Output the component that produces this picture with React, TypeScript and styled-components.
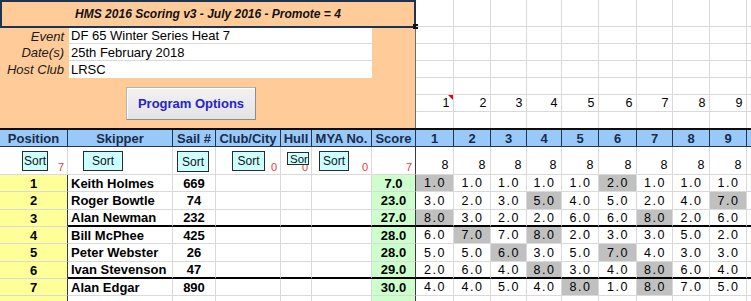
import React from 'react';
import styled, { createGlobalStyle } from 'styled-components';

const GlobalStyle = createGlobalStyle`
  html, body { margin: 0; padding: 0; background: #fff; }
  body {
    font-family: "Liberation Sans", Arial, sans-serif;
    font-size: 13px;
    color: #000;
    overflow: hidden;
  }
  * { box-sizing: border-box; }
`;

const MAIN_W = [68, 105, 43, 65, 31, 60, 44];
const RACE_W = [38, 37, 36, 35, 37, 38, 36, 37, 37];
const EXTRA_W = 40;
const gridCols = [...MAIN_W, ...RACE_W, EXTRA_W].map((w) => `${w}px`).join(' ');
const raceCols = [...RACE_W, EXTRA_W].map((w) => `${w}px`).join(' ');

const GRID = '#d9d9d9';
const DARK = '#3a3a3a';

const Sheet = styled.div`
  width: 751px;
  height: 301px;
  overflow: hidden;
  background: #fff;
`;

const Top = styled.div`
  display: flex;
  height: 128px;
`;

const Panel = styled.div`
  width: 416px;
  flex: none;
  background: #ffcc99;
  display: flex;
  flex-direction: column;
`;

const TitleBox = styled.div`
  position: relative;
  height: 28px;
  border: 2px solid #1c3352;
  display: flex;
  align-items: center;
  justify-content: center;
  font-weight: bold;
  font-style: italic;
  font-size: 12px;
  color: #111;
`;

const Handle = styled.span`
  position: absolute;
  right: -4px;
  bottom: -3px;
  width: 5px;
  height: 5px;
  background: #111;
`;

const InfoArea = styled.div`
  flex: 1;
  display: flex;
  flex-direction: column;
  border-right: 1px solid #6b6b6b;
`;

const InfoRow = styled.div<{ $h: number }>`
  display: flex;
  height: ${(p) => p.$h}px;
`;

const Label = styled.div`
  width: 69px;
  display: flex;
  align-items: center;
  justify-content: flex-end;
  padding-right: 5px;
  font-style: italic;
  color: #1a1a1a;
`;

const Value = styled.div<{ $last?: boolean }>`
  width: 303px;
  display: flex;
  align-items: center;
  padding-left: 2px;
  background: #fff;
  border-bottom: ${(p) => (p.$last ? 'none' : `1px solid ${GRID}`)};
`;

const ButtonArea = styled.div`
  flex: 1;
  padding: 9px 0 0 126px;
`;

const ProgramButton = styled.button`
  width: 130px;
  height: 33px;
  padding: 0;
  font-family: "Liberation Sans", Arial, sans-serif;
  font-size: 13px;
  font-weight: bold;
  color: #2424c8;
  background: linear-gradient(#f2f2f2, #e3e3e3);
  border: 1px solid #b4b4b4;
  border-right-color: #8c8c8c;
  border-bottom-color: #8c8c8c;
  box-shadow: inset 1px 1px 0 #fff;
`;

const RightGrid = styled.div`
  flex: none;
  display: grid;
  grid-template-columns: ${raceCols};
  grid-template-rows: 27px 17px 17px 17px 17px 17px 16px;
`;

const GridCell = styled.div<{ $noBottom?: boolean }>`
  position: relative;
  display: flex;
  align-items: center;
  justify-content: flex-end;
  padding-right: 2px;
  border-right: 1px solid ${GRID};
  border-bottom: ${(p) => (p.$noBottom ? 'none' : `1px solid ${GRID}`)};
  font-size: 12.5px;
  letter-spacing: 1.5px;
`;

const CommentMark = styled.span`
  position: absolute;
  top: 0;
  right: 0;
  width: 0;
  height: 0;
  border-top: 5px solid #d01010;
  border-left: 5px solid transparent;
`;

const HeaderRow = styled.div`
  display: grid;
  grid-template-columns: ${gridCols};
  height: 19px;
  border-top: 2px solid #0d0d0d;
`;

const HeaderCell = styled.div`
  display: flex;
  align-items: center;
  justify-content: center;
  background: #99c9f9;
  border-right: 1px solid #24334f;
  border-bottom: 1px solid #24334f;
  font-weight: bold;
  font-size: 13px;
  color: #1b2b4b;
  white-space: nowrap;
  overflow: hidden;
`;

const SortRow = styled.div`
  display: grid;
  grid-template-columns: ${gridCols};
  height: 28px;
`;

const SortCell = styled.div<{ $darkRight?: boolean; $count?: boolean }>`
  position: relative;
  display: flex;
  align-items: ${(p) => (p.$count ? 'flex-end' : 'flex-start')};
  justify-content: ${(p) => (p.$count ? 'flex-end' : 'flex-start')};
  padding: ${(p) => (p.$count ? '0 3px 2px 0' : '0')};
  border-right: 1px solid ${(p) => (p.$darkRight ? DARK : GRID)};
  border-bottom: 1px solid ${GRID};
  font-size: 12.5px;
  letter-spacing: ${(p) => (p.$count ? '1.5px' : '0')};
`;

const SortButton = styled.div<{ $x: number; $y: number; $w: number; $h: number }>`
  position: relative;
  z-index: 1;
  margin: ${(p) => `${p.$y}px 0 0 ${p.$x}px`};
  width: ${(p) => p.$w}px;
  height: ${(p) => p.$h}px;
  flex: none;
  background: #ccffff;
  border: 1px solid #2a2a2a;
  display: flex;
  align-items: center;
  justify-content: ${(p) => (p.$w < 25 ? 'flex-start' : 'center')};
  padding-left: ${(p) => (p.$w < 25 ? '2px' : '0')};
  overflow: hidden;
  white-space: nowrap;
  font-size: ${(p) => (p.$w < 25 ? '11.5px' : '12px')};
  letter-spacing: 0;
  color: #111;
`;

const RedCount = styled.span`
  position: absolute;
  right: 3px;
  bottom: 1px;
  font-size: 11px;
  letter-spacing: 0;
  color: #e03a3a;
`;

const DataRow = styled.div<{ $h: number }>`
  display: grid;
  grid-template-columns: ${gridCols};
  height: ${(p) => p.$h}px;
`;

const Cell = styled.div<{
  $bg?: string;
  $align?: 'left' | 'center';
  $bold?: boolean;
  $thick?: boolean;
  $darkRight?: boolean;
}>`
  display: flex;
  align-items: center;
  justify-content: ${(p) => (p.$align === 'left' ? 'flex-start' : 'center')};
  padding-left: ${(p) => (p.$align === 'left' ? '3px' : '0')};
  background: ${(p) => p.$bg || '#fff'};
  font-weight: ${(p) => (p.$bold ? 'bold' : 'normal')};
  border-right: 1px solid ${(p) => (p.$darkRight ? DARK : GRID)};
  border-bottom: ${(p) => (p.$thick ? '2px solid #000' : `1px solid ${GRID}`)};
  white-space: nowrap;
  overflow: hidden;
`;

const RaceValue = styled(Cell)<{ $gray?: boolean }>`
  background: ${(p) => (p.$gray ? '#c0c0c0' : '#fff')};
  font-size: 12.5px;
  letter-spacing: 1.5px;
  padding-left: 1px;
`;

type Entry = {
  pos: number;
  name: string;
  sail: string;
  score: string;
  races: string[];
  gray: number[];
};

const entries: Entry[] = [
  { pos: 1, name: 'Keith Holmes', sail: '669', score: '7.0', races: ['1.0', '1.0', '1.0', '1.0', '1.0', '2.0', '1.0', '1.0', '1.0'], gray: [0, 5] },
  { pos: 2, name: 'Roger Bowtle', sail: '74', score: '23.0', races: ['3.0', '2.0', '3.0', '5.0', '4.0', '5.0', '2.0', '4.0', '7.0'], gray: [3, 8] },
  { pos: 3, name: 'Alan Newman', sail: '232', score: '27.0', races: ['8.0', '3.0', '2.0', '2.0', '6.0', '6.0', '8.0', '2.0', '6.0'], gray: [0, 6] },
  { pos: 4, name: 'Bill McPhee', sail: '425', score: '28.0', races: ['6.0', '7.0', '7.0', '8.0', '2.0', '3.0', '3.0', '5.0', '2.0'], gray: [1, 3] },
  { pos: 5, name: 'Peter Webster', sail: '26', score: '28.0', races: ['5.0', '5.0', '6.0', '3.0', '5.0', '7.0', '4.0', '3.0', '3.0'], gray: [2, 5] },
  { pos: 6, name: 'Ivan Stevenson', sail: '47', score: '29.0', races: ['2.0', '6.0', '4.0', '8.0', '3.0', '4.0', '8.0', '6.0', '4.0'], gray: [3, 6] },
  { pos: 7, name: 'Alan Edgar', sail: '890', score: '30.0', races: ['4.0', '4.0', '5.0', '4.0', '8.0', '1.0', '8.0', '7.0', '5.0'], gray: [4, 6] },
];

const rowHeights = [17, 18, 17, 17, 18, 17, 17, 17];
const groupEnds = [3, 6];

const headers = ['Position', 'Skipper', 'Sail #', 'Club/City', 'Hull', 'MYA No.', 'Score', '1', '2', '3', '4', '5', '6', '7', '8', '9', ''];

type SortSpec = { x: number; y: number; w: number; h: number; count?: string };
const sortSpecs: SortSpec[] = [
  { x: 22, y: 4, w: 26, h: 20, count: '7' },
  { x: 15, y: 4, w: 40, h: 20 },
  { x: 4, y: 4, w: 32, h: 21 },
  { x: 16, y: 4, w: 33, h: 20, count: '0' },
  { x: 6, y: 5, w: 22, h: 13, count: '0' },
  { x: 7, y: 4, w: 30, h: 20, count: '0' },
];

const raceNums = ['1', '2', '3', '4', '5', '6', '7', '8', '9', ''];

export default function App() {
  return (
    <>
      <GlobalStyle />
      <Sheet>
        <Top>
          <Panel>
            <TitleBox>
              HMS 2016 Scoring v3 - July 2016 - Promote = 4
              <Handle />
            </TitleBox>
            <InfoArea>
              <InfoRow $h={16}>
                <Label>Event</Label>
                <Value>DF 65 Winter Series Heat 7</Value>
              </InfoRow>
              <InfoRow $h={17}>
                <Label>Date(s)</Label>
                <Value>25th February 2018</Value>
              </InfoRow>
              <InfoRow $h={17}>
                <Label>Host Club</Label>
                <Value $last>LRSC</Value>
              </InfoRow>
              <ButtonArea>
                <ProgramButton type="button">Program Options</ProgramButton>
              </ButtonArea>
            </InfoArea>
          </Panel>
          <RightGrid>
            {Array.from({ length: 7 }).map((_, r) =>
              raceNums.map((n, c) => (
                <GridCell key={`${r}-${c}`} $noBottom={r === 6}>
                  {r === 5 ? n : ''}
                  {r === 5 && c === 0 ? <CommentMark /> : null}
                </GridCell>
              ))
            )}
          </RightGrid>
        </Top>

        <HeaderRow>
          {headers.map((h, i) => (
            <HeaderCell key={i}>{h}</HeaderCell>
          ))}
        </HeaderRow>

        <SortRow>
          {sortSpecs.map((s, i) => (
            <SortCell key={i}>
              <SortButton $x={s.x} $y={s.y} $w={s.w} $h={s.h}>
                Sort
              </SortButton>
              {s.count && <RedCount>{s.count}</RedCount>}
            </SortCell>
          ))}
          <SortCell $darkRight>
            <RedCount>7</RedCount>
          </SortCell>
          {raceNums.map((n, i) => (
            <SortCell key={`r${i}`} $count>
              {n ? '8' : ''}
            </SortCell>
          ))}
        </SortRow>

        {rowHeights.map((h, r) => {
          const e = entries[r];
          const thick = groupEnds.includes(r + 1);
          return (
            <DataRow key={r} $h={h}>
              <Cell $bg="#ffff99" $bold $darkRight>
                {e ? e.pos : ''}
              </Cell>
              <Cell $align="left" $bold $thick={thick}>
                {e ? e.name : ''}
              </Cell>
              <Cell $bold $thick={thick}>
                {e ? e.sail : ''}
              </Cell>
              <Cell $thick={thick} />
              <Cell $thick={thick} />
              <Cell $thick={thick} />
              <Cell $bg="#ccffcc" $bold $thick={thick} $darkRight>
                {e ? e.score : ''}
              </Cell>
              {raceNums.map((_, c) => (
                <RaceValue key={c} $thick={thick} $gray={!!e && e.gray.includes(c)}>
                  {e && c < 9 ? e.races[c] : ''}
                </RaceValue>
              ))}
            </DataRow>
          );
        })}
      </Sheet>
    </>
  );
}
